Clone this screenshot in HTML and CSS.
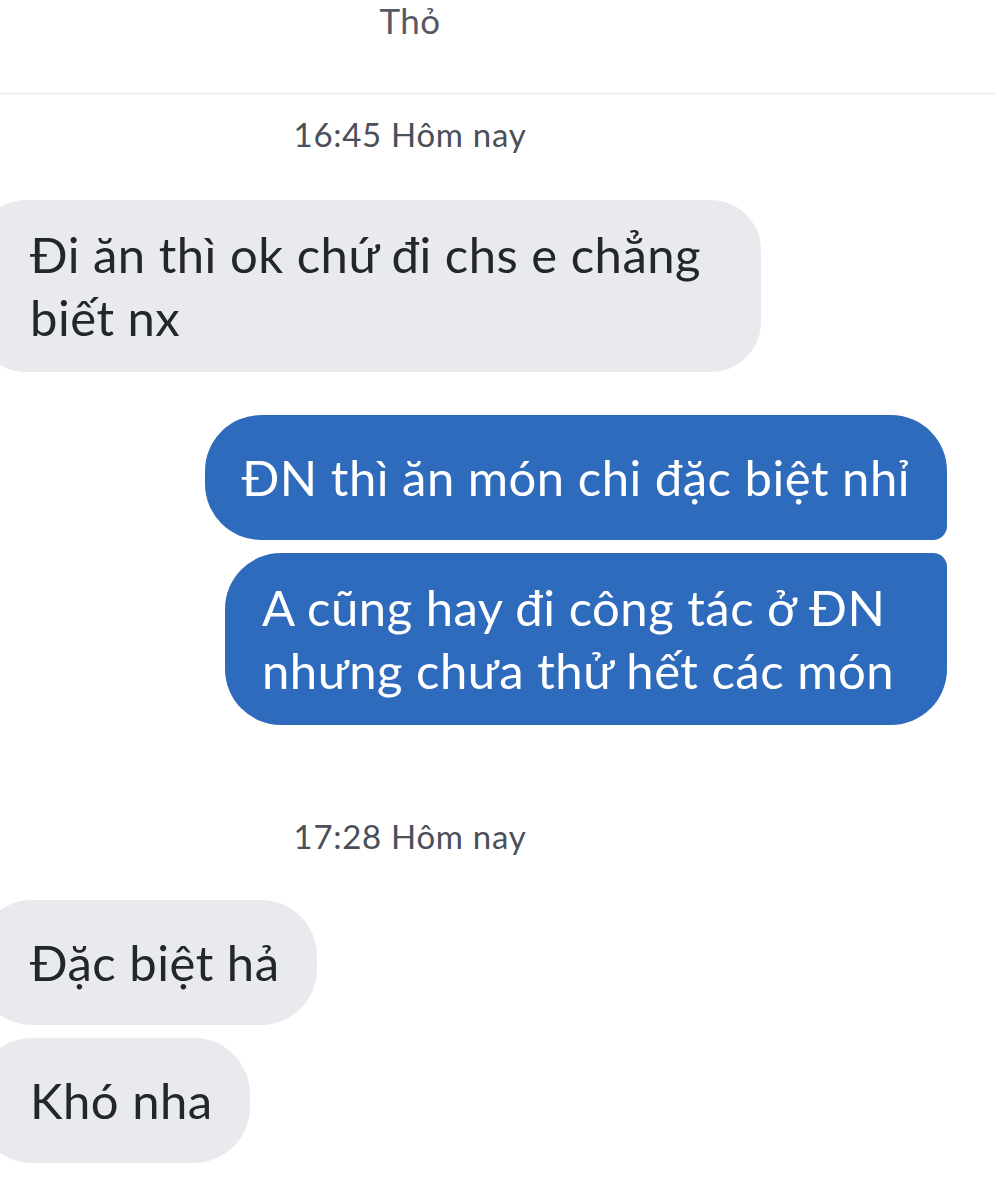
FILE: index.html
```html
<!DOCTYPE html>
<html lang="vi">
<head>
<meta charset="utf-8">
<title>Thỏ</title>
<link rel="stylesheet" href="styles.css">
</head>
<body>
<header class="chat-header">
  <div class="chat-title">Thỏ</div>
</header>
<main class="thread">
  <div class="stamp stamp-first">16:45 Hôm nay</div>
  <div class="group group-in">
    <div class="bubble in single">Đi ăn thì ok chứ đi chs e chẳng biết nx</div>
  </div>
  <div class="group group-out">
    <div class="bubble out first">ĐN thì ăn món chi đặc biệt nhỉ</div>
    <div class="bubble out last">A cũng hay đi công tác ở ĐN nhưng chưa thử hết các món</div>
  </div>
  <div class="stamp stamp-second">17:28 Hôm nay</div>
  <div class="group group-in">
    <div class="bubble in">Đặc biệt hả</div>
    <div class="bubble in">Khó nha</div>
  </div>
</main>
</body>
</html>
```
FILE: styles.css
```css
html, body {
  margin: 0;
  padding: 0;
  background: #ffffff;
}
body {
  width: 996px;
  height: 1183px;
  overflow: hidden;
  font-family: "Lato", "Noto Sans", sans-serif;
}
.chat-header {
  height: 92px;
  border-bottom: 3px solid #f3f3f4;
  padding-right: 176px;
  box-sizing: content-box;
}
.chat-title {
  text-align: center;
  font-size: 35px;
  line-height: 40px;
  letter-spacing: 0.4px;
  color: #555963;
}
.thread {
  display: flex;
  flex-direction: column;
  padding-bottom: 40px;
}
.stamp {
  text-align: center;
  padding-right: 176px;
  font-size: 33px;
  line-height: 40px;
  letter-spacing: 0.7px;
  color: #4b4f58;
}
.stamp-first {
  margin-top: 19px;
  margin-bottom: 46px;
}
.stamp-second {
  margin-top: 91px;
  margin-bottom: 44px;
}
.group {
  display: flex;
  flex-direction: column;
  gap: 13px;
}
.group-in {
  align-items: flex-start;
}
.group-out {
  align-items: flex-end;
  margin-top: 43px;
  padding-right: 49px;
}
.bubble {
  box-sizing: border-box;
  min-height: 125px;
  max-width: 760px;
  display: flex;
  align-items: center;
  padding: 23px 37px;
  font-size: 49px;
  line-height: 63px;
  letter-spacing: 0.5px;
  border-radius: 56px;
}
.bubble.in {
  background: #e9eaee;
  color: #23262c;
  margin-left: -24px;
  padding-left: 54px;
}
.bubble.in.single {
  max-width: 785px;
  border-radius: 50px;
}
.bubble.out {
  background: #2f6bbc;
  color: #ffffff;
}
.bubble.out.first {
  border-bottom-right-radius: 14px;
}
.bubble.out.last {
  max-width: 722px;
  border-top-right-radius: 14px;
}
```
